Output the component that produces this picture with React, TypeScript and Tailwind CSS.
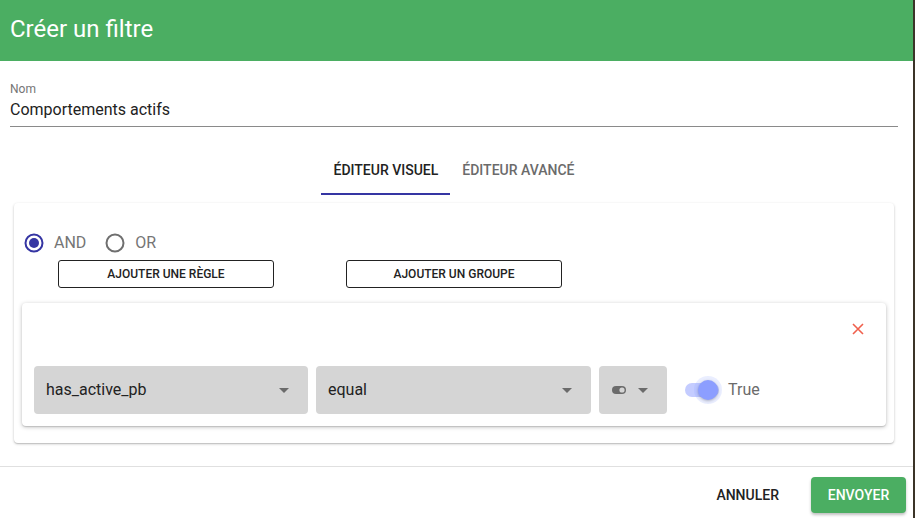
import React from "react";

function Radio({ checked }: { checked: boolean }) {
  return (
    <svg width="20" height="20" viewBox="0 0 20 20">
      <circle
        cx="10"
        cy="10"
        r="8.5"
        fill="none"
        stroke={checked ? "#3535a3" : "#6f6f6f"}
        strokeWidth="2"
      />
      {checked && <circle cx="10" cy="10" r="5" fill="#3535a3" />}
    </svg>
  );
}

function Caret() {
  return (
    <svg width="10" height="5" viewBox="0 0 10 5">
      <path d="M0 0 L10 0 L5 5 Z" fill="#6b6b6b" />
    </svg>
  );
}

function SelectBox({ label, width }: { label: string; width: string }) {
  return (
    <div className={`${width} h-[48px] bg-[#d5d5d5] rounded-[4px] flex items-center pl-[12px] pr-[19px]`}>
      <span className="flex-1 text-[16px] text-[#222]">{label}</span>
      <Caret />
    </div>
  );
}

export default function App() {
  return (
    <div className="flex h-[518px] w-full overflow-hidden" style={{ fontFamily: "Roboto, 'Noto Sans', sans-serif" }}>
      <div className="w-[913px] shrink-0 bg-white flex flex-col">
        <header className="h-[61px] bg-[#4bae62] flex items-center px-[10px] pb-[3px]">
          <h1 className="text-[24px] text-white font-normal">Créer un filtre</h1>
        </header>

        <div className="pl-[10px] pr-[15px]">
          <div className="mt-[21px] border-b border-[#8a8a8a] pb-[7px]">
            <div className="text-[12px] leading-[14px] text-[#757575]">Nom</div>
            <div className="mt-[4px] text-[16px] leading-[19px] text-[#222]">Comportements actifs</div>
          </div>

          <div className="mt-[20px] flex justify-center">
            <div className="h-[48px] px-3 flex items-center border-b-2 border-[#3535a3] text-[14px] font-medium text-[#222]">
              ÉDITEUR VISUEL
            </div>
            <div className="h-[48px] px-3 flex items-center border-b-2 border-transparent text-[14px] font-medium text-[#6b6b6b]">
              ÉDITEUR AVANCÉ
            </div>
          </div>

          <div className="mx-1 mt-[8px] bg-white rounded-[4px] shadow-[0_1px_3px_rgba(0,0,0,0.2),0_1px_1px_rgba(0,0,0,0.12)] pt-[30px] pb-[17px]">
            <div className="flex items-center pl-[10px] h-[20px]">
              <Radio checked />
              <span className="ml-[10px] text-[16px] text-[#757575]">AND</span>
              <span className="ml-[19px]">
                <Radio checked={false} />
              </span>
              <span className="ml-[10px] text-[16px] text-[#757575]">OR</span>
            </div>

            <div className="mt-[7px] flex pl-[44px] gap-[72px]">
              <button className="w-[216px] h-[28px] border border-[#222] rounded-[3px] text-[12px] font-medium text-[#222]">
                AJOUTER UNE RÈGLE
              </button>
              <button className="w-[216px] h-[28px] border border-[#222] rounded-[3px] text-[12px] font-medium text-[#222]">
                AJOUTER UN GROUPE
              </button>
            </div>

            <div className="mx-[8px] mt-[15px] bg-white rounded-[4px] shadow-[0_1px_4px_rgba(0,0,0,0.25),0_1px_1px_rgba(0,0,0,0.12)] pb-[12px]">
              <div className="flex justify-end pt-[20px] pr-[22px]">
                <svg width="12" height="12" viewBox="0 0 12 12">
                  <path d="M1 1 L11 11 M11 1 L1 11" stroke="#f0604d" strokeWidth="1.6" />
                </svg>
              </div>
              <div className="mt-[31px] flex items-center pl-[12px] gap-[8px]">
                <SelectBox label="has_active_pb" width="w-[274px]" />
                <SelectBox label="equal" width="w-[275px]" />
                <div className="w-[68px] h-[48px] bg-[#d5d5d5] rounded-[4px] flex items-center pl-[13px] gap-[12px]">
                  <svg width="14" height="8" viewBox="0 0 14 8">
                    <rect x="0" y="0" width="14" height="8" rx="4" fill="#6b6b6b" />
                    <circle cx="10" cy="4" r="2.6" fill="#d5d5d5" />
                  </svg>
                  <Caret />
                </div>
                <div className="ml-[10px] relative w-[34px] h-[14px] rounded-full bg-[#c4ccff]">
                  <div className="absolute left-[13px] top-[-3px] w-[20px] h-[20px] rounded-full bg-[#8c9eff] shadow-[0_0_0_4px_rgba(140,158,255,0.18),0_1px_3px_rgba(0,0,0,0.3)]" />
                </div>
                <span className="ml-[1px] text-[16px] text-[#6b6b6b]">True</span>
              </div>
            </div>
          </div>
        </div>

        <div className="mt-[23px] border-t border-[#e0e0e0] flex justify-end items-start pt-[10px] pr-[7px]">
          <button className="h-[36px] px-4 text-[14px] font-medium text-[#222]">ANNULER</button>
          <button className="ml-[16px] w-[95px] h-[36px] rounded-[4px] bg-[#4bae62] text-[14px] font-medium text-white shadow-[0_2px_3px_rgba(0,0,0,0.25)]">
            ENVOYER
          </button>
        </div>
      </div>
      <div className="flex-1 bg-[#3b3428]" />
    </div>
  );
}
